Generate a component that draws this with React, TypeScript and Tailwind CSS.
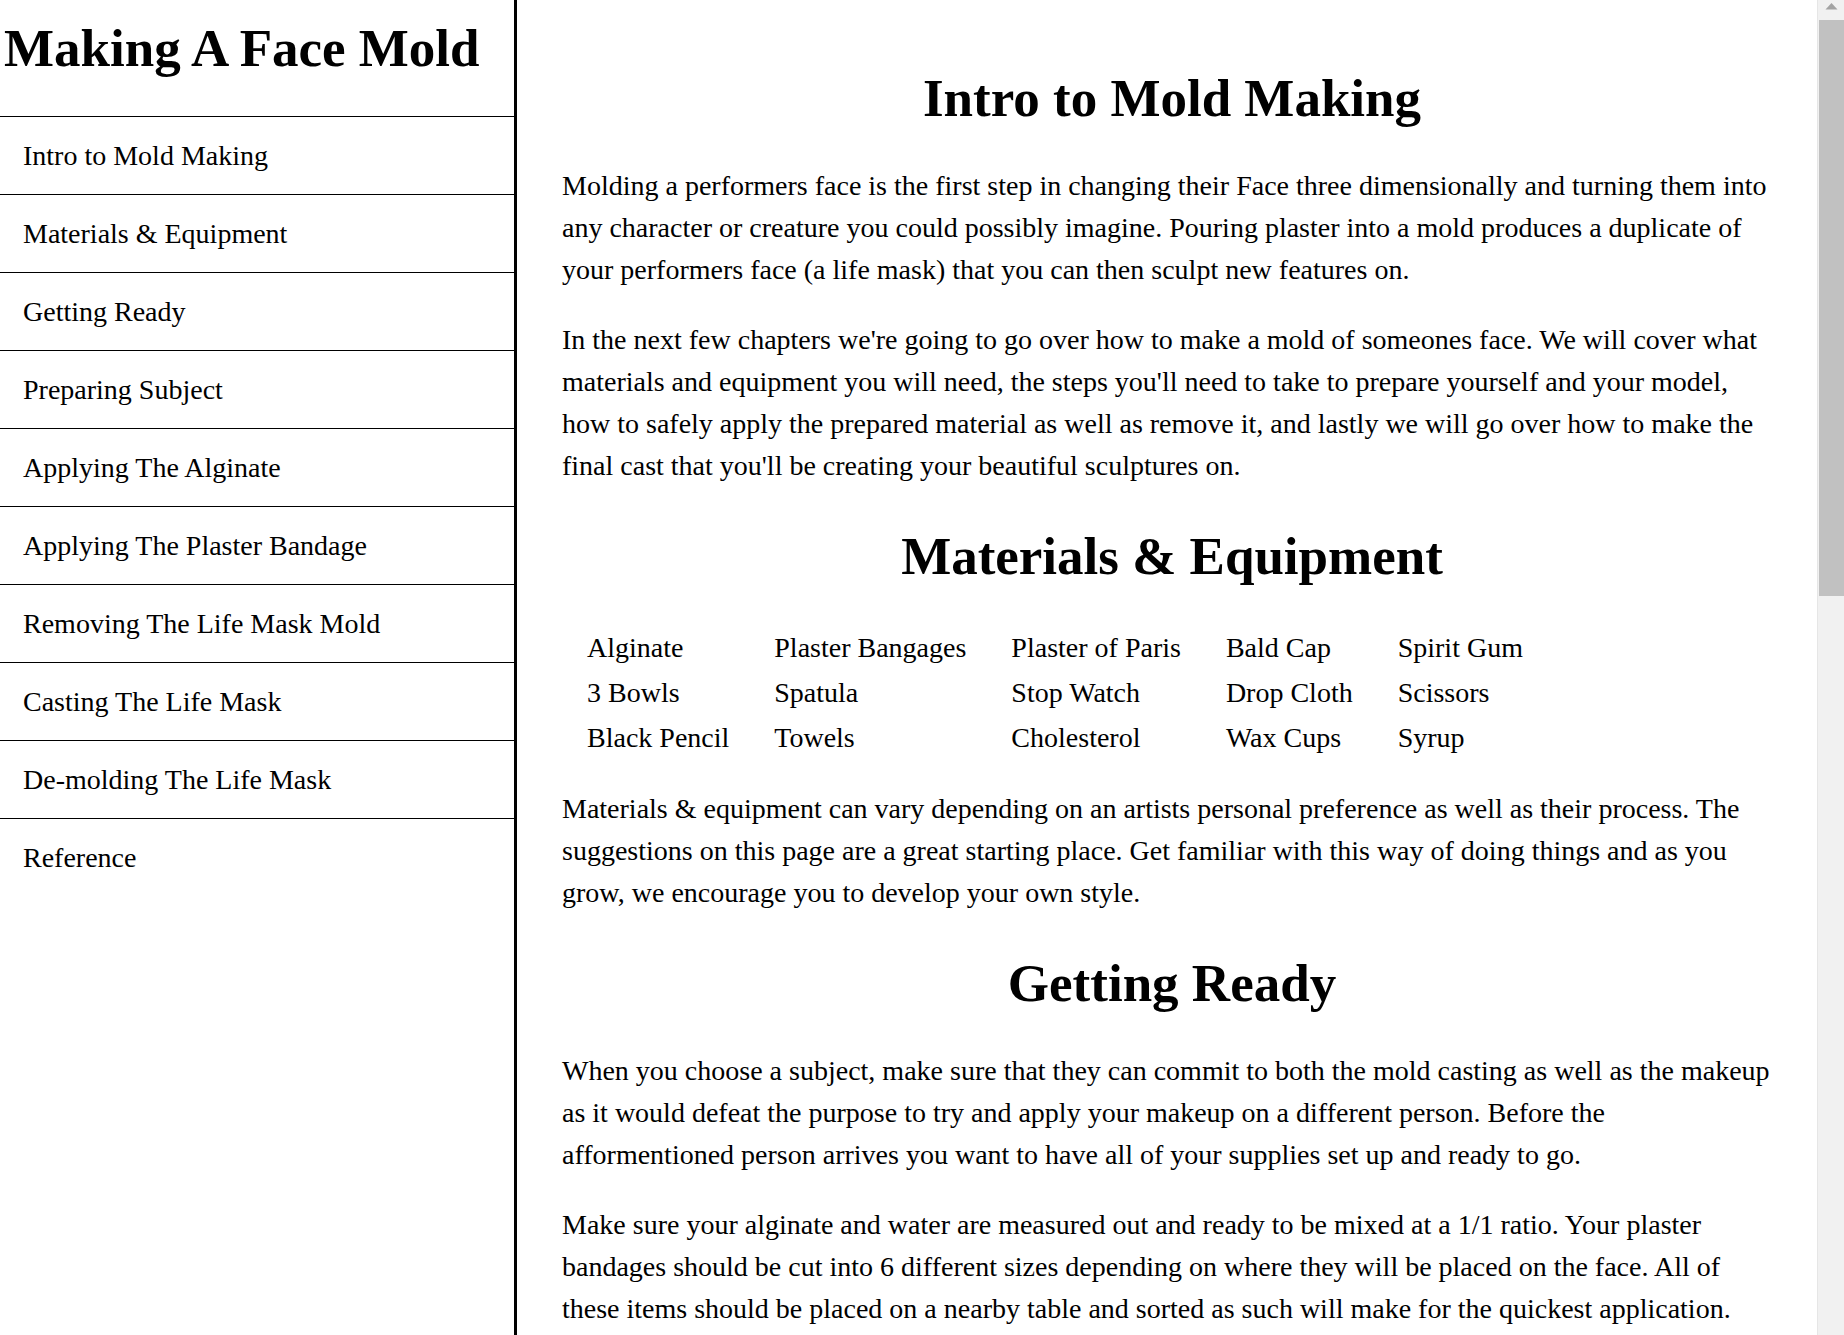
import React from "react";

const navItems = [
  "Intro to Mold Making",
  "Materials & Equipment",
  "Getting Ready",
  "Preparing Subject",
  "Applying The Alginate",
  "Applying The Plaster Bandage",
  "Removing The Life Mask Mold",
  "Casting The Life Mask",
  "De-molding The Life Mask",
  "Reference",
];

const materials = [
  "Alginate", "Plaster Bangages", "Plaster of Paris", "Bald Cap", "Spirit Gum",
  "3 Bowls", "Spatula", "Stop Watch", "Drop Cloth", "Scissors",
  "Black Pencil", "Towels", "Cholesterol", "Wax Cups", "Syrup",
];

export default function App() {
  return (
    <div
      className="flex h-[1335px] w-[1844px] overflow-hidden bg-white text-black"
      style={{ fontFamily: '"Liberation Serif", "Times New Roman", serif' }}
    >
      {/* Sidebar */}
      <aside className="flex h-full w-[517px] shrink-0 flex-col border-r-[3px] border-black">
        <div className="h-[117px] border-b border-black pl-[4px] pt-[19px]">
          <h1 className="text-[53px] font-bold leading-[58px] whitespace-nowrap">Making A Face Mold</h1>
        </div>
        <nav className="flex flex-col">
          {navItems.map((item, i) => (
            <a
              key={item}
              href="#"
              className={`flex h-[78px] items-center pl-[23px] text-[28px] leading-[32px] ${
                i < navItems.length - 1 ? "border-b border-black" : ""
              }`}
            >
              {item}
            </a>
          ))}
        </nav>
      </aside>

      {/* Main */}
      <main className="h-full min-w-0 flex-1 overflow-hidden pl-[45px] pr-[35px] pt-[29px] text-[28px] leading-[42px]">
        <h2 className="mb-[38px] mt-[40px] text-center text-[53px] font-bold leading-[58px]">Intro to Mold Making</h2>
        <p className="mb-[28px]">
          Molding a performers face is the first step in changing their Face three dimensionally and turning them into
          any character or creature you could possibly imagine. Pouring plaster into a mold produces a duplicate of
          your performers face (a life mask) that you can then sculpt new features on.
        </p>
        <p>
          In the next few chapters we're going to go over how to make a mold of someones face. We will cover what
          materials and equipment you will need, the steps you'll need to take to prepare yourself and your model,
          how to safely apply the prepared material as well as remove it, and lastly we will go over how to make the
          final cast that you'll be creating your beautiful sculptures on.
        </p>

        <h2 className="mb-[40px] mt-[40px] text-center text-[53px] font-bold leading-[58px]">Materials &amp; Equipment</h2>
        <div className="grid grid-cols-[repeat(5,max-content)] gap-x-[45px] pl-[25px]">
          {materials.map((m) => (
            <div key={m} className="flex h-[45px] items-center leading-[32px] whitespace-nowrap">
              {m}
            </div>
          ))}
        </div>
        <p className="mt-[28px]">
          Materials &amp; equipment can vary depending on an artists personal preference as well as their process. The
          suggestions on this page are a great starting place. Get familiar with this way of doing things and as you
          grow, we encourage you to develop your own style.
        </p>

        <h2 className="mb-[38px] mt-[40px] text-center text-[53px] font-bold leading-[58px]">Getting Ready</h2>
        <p className="mb-[28px]">
          When you choose a subject, make sure that they can commit to both the mold casting as well as the makeup
          as it would defeat the purpose to try and apply your makeup on a different person. Before the
          afformentioned person arrives you want to have all of your supplies set up and ready to go.
        </p>
        <p className="mb-[28px]">
          Make sure your alginate and water are measured out and ready to be mixed at a 1/1 ratio. Your plaster
          bandages should be cut into 6 different sizes depending on where they will be placed on the face. All of
          these items should be placed on a nearby table and sorted as such will make for the quickest application.
        </p>
      </main>

      {/* Fake scrollbar */}
      <div className="relative h-full w-[27px] shrink-0 border-l border-[#e6e6e6] bg-[#f1f1f1]">
        <svg className="absolute left-[7px] top-[2px]" width="13" height="9" viewBox="0 0 13 9">
          <polygon points="6.5,1 12.5,7.5 0.5,7.5" fill="#a3a3a3" />
        </svg>
        <div className="absolute left-[1px] right-0 top-[20px] h-[576px] bg-[#c1c1c1]" />
      </div>
    </div>
  );
}
